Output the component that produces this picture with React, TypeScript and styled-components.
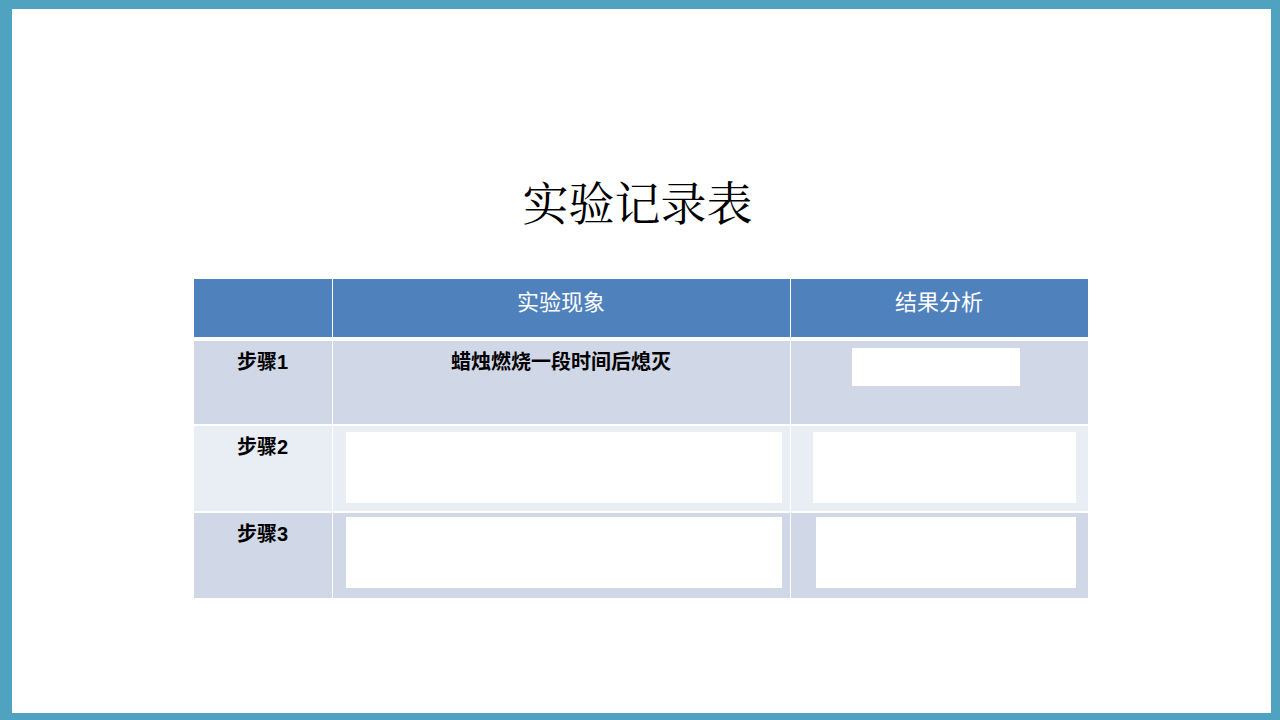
import React from "react";
import styled, { createGlobalStyle } from "styled-components";

const Global = createGlobalStyle`
  html, body { margin: 0; padding: 0; background: #4fa3c1; }
  body { font-family: "Liberation Serif", "Noto Sans CJK SC", serif; }
`;

const Frame = styled.div`
  width: 1280px; height: 720px; box-sizing: border-box;
  padding: 9px 9px 7px 12px; background: #4fa3c1;
`;
const Slide = styled.div`
  width: 100%; height: 100%; background: #fff;
  display: flex; flex-direction: column; align-items: center;
`;
const Title = styled.h1`
  margin: 168px 0 0; font-weight: normal; font-size: 46px; line-height: 56px;
  font-family: "Liberation Serif", "Noto Serif CJK SC", "Noto Sans CJK SC", serif;
  color: #000; transform: translateX(-4px);
`;
const Table = styled.div`
  margin-top: 46px; margin-left: -2px;
  display: grid; grid-template-columns: 138px 457px 297px;
  grid-template-rows: 60px 83px 85px 85px;
  column-gap: 1px; row-gap: 2px; background: #fff;
`;
const Head = styled.div`
  background: #4f81bd; color: #fff; font-size: 22px; text-align: center;
  padding-top: 5px; font-family: "Noto Sans CJK SC", sans-serif;
  margin-bottom: 2px;
`;
const Cell = styled.div<{ $light?: boolean; $pad?: string }>`
  background: ${p => (p.$light ? "#e9edf4" : "#d0d8e8")};
  padding: ${p => p.$pad || "0"};
  box-sizing: border-box;
  display: flex; flex-direction: column; align-items: center;
`;
const Label = styled.div`
  font-weight: bold; font-size: 20px; color: #000; padding-top: 5px;
  font-family: "Liberation Sans", "Noto Sans CJK SC", sans-serif;
`;
const Blank = styled.div<{ $w: number; $h: number; $ml?: number }>`
  width: ${p => p.$w}px; height: ${p => p.$h}px; background: #fff;
  align-self: flex-start; margin-left: ${p => p.$ml ?? 0}px;
`;

export default function App() {
  return (
    <Frame>
      <Global />
      <Slide>
        <Title>实验记录表</Title>
        <Table>
          <Head />
          <Head>实验现象</Head>
          <Head>结果分析</Head>
          <Cell><Label>步骤1</Label></Cell>
          <Cell><Label>蜡烛燃烧一段时间后熄灭</Label></Cell>
          <Cell $pad="7px 0 0"><Blank $w={168} $h={38} $ml={61} /></Cell>
          <Cell $light><Label>步骤2</Label></Cell>
          <Cell $light $pad="6px 0 0"><Blank $w={436} $h={71} $ml={13} /></Cell>
          <Cell $light $pad="6px 0 0"><Blank $w={263} $h={71} $ml={22} /></Cell>
          <Cell><Label>步骤3</Label></Cell>
          <Cell $pad="4px 0 0"><Blank $w={436} $h={71} $ml={13} /></Cell>
          <Cell $pad="4px 0 0"><Blank $w={260} $h={71} $ml={25} /></Cell>
        </Table>
      </Slide>
    </Frame>
  );
}
